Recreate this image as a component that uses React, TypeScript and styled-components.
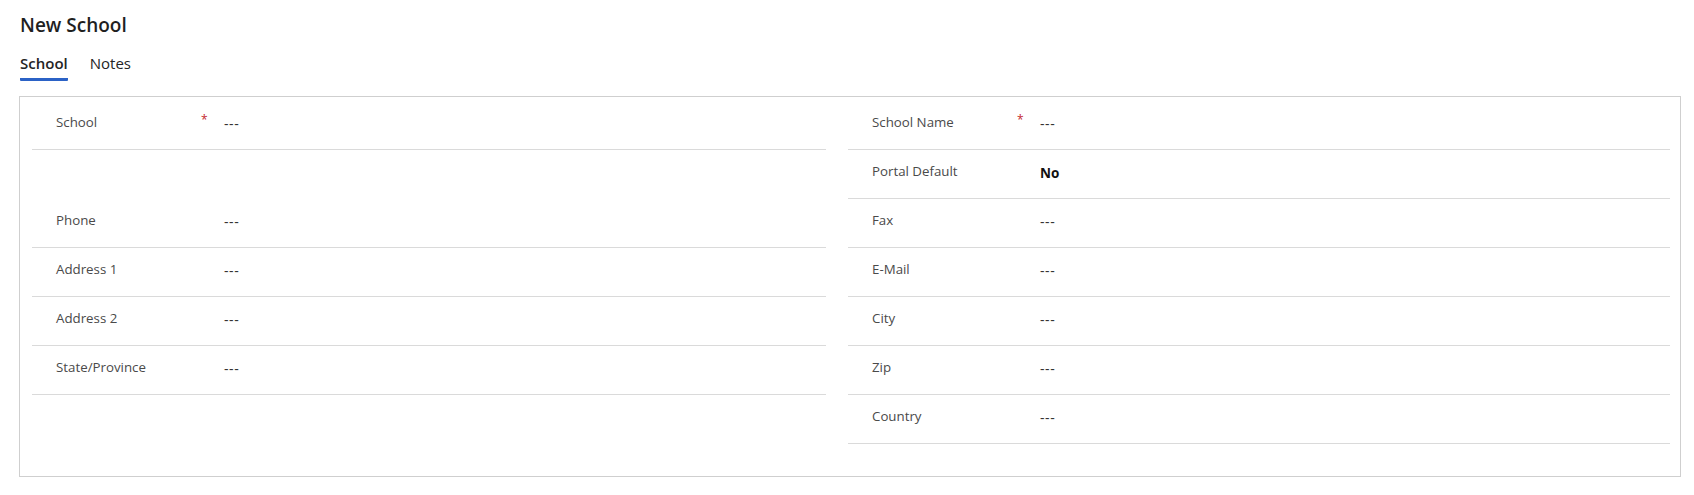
import React from "react";
import styled, { createGlobalStyle } from "styled-components";

const GlobalStyle = createGlobalStyle`
  html, body { margin: 0; padding: 0; background: #ffffff; }
  body { font-family: "Open Sans", "Noto Sans", Arial, sans-serif; color: #242424; }
`;

const Page = styled.div`
  padding: 11px 13px 0 19px;
`;

const Title = styled.h1`
  margin: 0;
  font-size: 19px;
  line-height: 28px;
  font-weight: 600;
  color: #1f1f1f;
  padding-left: 1px;
`;

const Tabs = styled.div`
  display: flex;
  gap: 22px;
  margin-top: 14px;
  padding-left: 1px;
`;

const Tab = styled.div<{ $active?: boolean }>`
  font-size: 15px;
  line-height: 20px;
  padding-bottom: 5px;
  color: #242424;
  font-weight: ${(p) => (p.$active ? 600 : 400)};
  border-bottom: 3px solid ${(p) => (p.$active ? "#2b62c6" : "transparent")};
  border-radius: 1px;
`;

const FormBox = styled.div`
  margin-top: 15px;
  border: 1px solid #cfcfcf;
  padding: 4px 10px 32px 12px;
  display: grid;
  grid-template-columns: 794px 1fr;
  column-gap: 22px;
  align-items: start;
`;

const Column = styled.div`
  display: flex;
  flex-direction: column;
`;

const Row = styled.div<{ $plain?: boolean }>`
  height: 48px;
  border-bottom: 1px solid ${(p) => (p.$plain ? "transparent" : "#dadada")};
  display: grid;
  grid-template-columns: 145px 23px 1fr;
  padding-left: 24px;
  align-items: start;
`;

const Label = styled.div`
  font-size: 13.3px;
  line-height: 18px;
  padding-top: 12px;
  color: #4a4a4a;
`;

const Required = styled.span`
  font-size: 12px;
  line-height: 18px;
  padding-top: 10px;
  color: #c4262c;
`;

const Value = styled.div<{ $bold?: boolean }>`
  font-size: ${(p) => (p.$bold ? "13.5px" : "14px")};
  line-height: 20px;
  padding-top: 13px;
  font-weight: ${(p) => (p.$bold ? 700 : 400)};
  color: ${(p) => (p.$bold ? "#111111" : "#333333")};
  letter-spacing: ${(p) => (p.$bold ? "0" : "0.6px")};
`;

type Field = { label?: string; value?: string; required?: boolean; bold?: boolean; spacer?: boolean };

const leftFields: Field[] = [
  { label: "School", value: "---", required: true },
  { spacer: true },
  { label: "Phone", value: "---" },
  { label: "Address 1", value: "---" },
  { label: "Address 2", value: "---" },
  { label: "State/Province", value: "---" },
];

const rightFields: Field[] = [
  { label: "School Name", value: "---", required: true },
  { label: "Portal Default", value: "No", bold: true },
  { label: "Fax", value: "---" },
  { label: "E-Mail", value: "---" },
  { label: "City", value: "---" },
  { label: "Zip", value: "---" },
  { label: "Country", value: "---" },
];

function FieldRow({ f }: { f: Field }) {
  if (f.spacer) return <Row $plain />;
  return (
    <Row>
      <Label>{f.label}</Label>
      <Required>{f.required ? "*" : ""}</Required>
      <Value $bold={f.bold}>{f.value}</Value>
    </Row>
  );
}

export default function App() {
  return (
    <>
      <GlobalStyle />
      <Page>
        <Title>New School</Title>
        <Tabs>
          <Tab $active>School</Tab>
          <Tab>Notes</Tab>
        </Tabs>
        <FormBox>
          <Column>
            {leftFields.map((f, i) => (
              <FieldRow key={i} f={f} />
            ))}
          </Column>
          <Column>
            {rightFields.map((f, i) => (
              <FieldRow key={i} f={f} />
            ))}
          </Column>
        </FormBox>
      </Page>
    </>
  );
}
